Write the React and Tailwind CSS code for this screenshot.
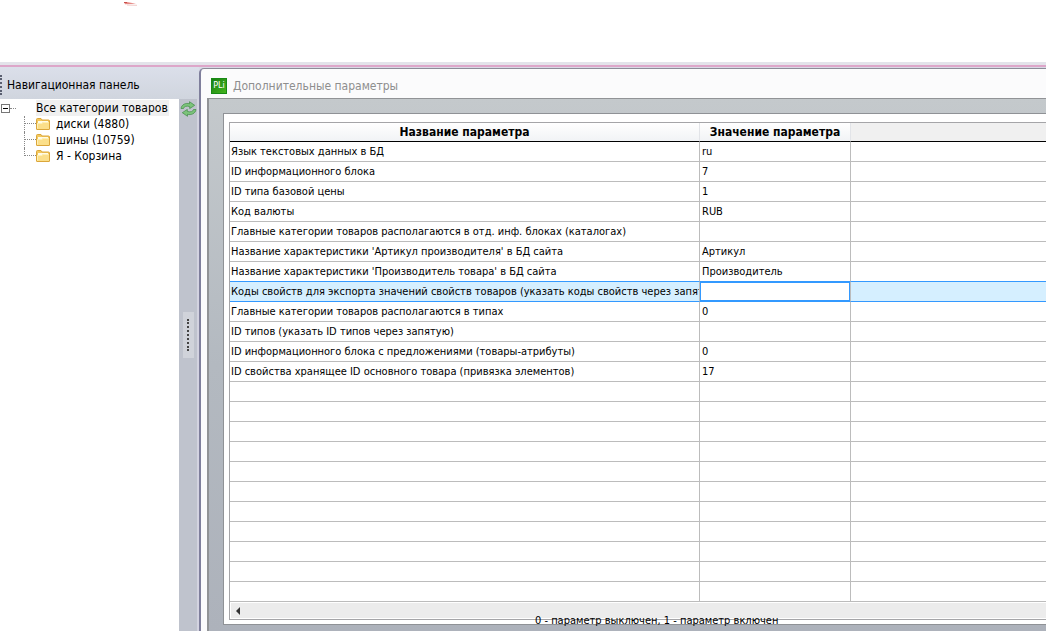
import clsx from "clsx";

const params = [
    { name: "Язык текстовых данных в БД", value: "ru" },
    { name: "ID информационного блока", value: "7" },
    { name: "ID типа базовой цены", value: "1" },
    { name: "Код валюты", value: "RUB" },
    { name: "Главные категории товаров располагаются в отд. инф. блоках (каталогах)", value: "" },
    { name: "Название характеристики 'Артикул производителя' в БД сайта", value: "Артикул" },
    { name: "Название характеристики 'Производитель товара' в БД сайта", value: "Производитель" },
    { name: "Коды свойств для экспорта значений свойств товаров (указать коды свойств через запятую)", value: "" },
    { name: "Главные категории товаров располагаются в типах", value: "0" },
    { name: "ID типов (указать ID типов через запятую)", value: "" },
    { name: "ID информационного блока с предложениями (товары-атрибуты)", value: "0" },
    { name: "ID свойства хранящее ID основного товара (привязка элементов)", value: "17" },
];

const EMPTY_ROWS = 11;
const SELECTED = 7;

const categories = ["диски (4880)", "шины (10759)", "Я - Корзина"];

const FolderIcon = () => (
    <svg width="14" height="12" viewBox="0 0 14 12" className="shrink-0">
        <path d="M.5 11V1.500Q.5.5 1.500.5H5L6 2H12.500Q13.500 2 13.500 3V11z" fill="#f3c85c" stroke="#dba63a" />
        <path d="M2 3H12V5H2z" fill="#fffbe6" />
        <path d="M1 11V5H6L7 4H13V11z" fill="#fbdf8a" />
        <path d="M.5 11.500H13.500" stroke="#dba63a" />
        <path d="M1.500 10.500V5.500H6.200L7.200 4.500H12.500" fill="none" stroke="#fff0b4" />
    </svg>
);

const RefreshIcon = () => (
    <svg width="17" height="16" viewBox="0 0 17 16">
        <path d="M1 7.500C1.500 3.500 6 1.500 9.500 2.800V.7L14.700 4.300 9.700 7.600V5.600C6.500 4.600 4 5.300 3.500 7.500z" fill="#7cc47a" stroke="#3f8b45" strokeWidth=".7" />
        <path d="M16 8.500C15.500 12.500 11 14.500 7.500 13.200V15.300L2.300 11.700 7.300 8.400V10.400C10.500 11.400 13 10.700 13.500 8.500z" fill="#7cc47a" stroke="#3f8b45" strokeWidth=".7" />
    </svg>
);

const RedMark = () => (
    <svg width="14" height="6" viewBox="0 0 14 6" className="ml-[124px]">
        <path d="M0 1H3L12 2.700 1 3.200z" fill="#e58a86" />
        <path d="M0 1.500H3" stroke="#c94f4a" />
        <path d="M3 4 13 4.300" stroke="#f0c9c6" />
    </svg>
);

const NavPanel = () => (
    <aside className="flex w-[199px] shrink-0 flex-col">
        <div className="flex h-8 items-center gap-1 bg-linear-to-b from-[#dbdfea] to-[#d0d5de] pt-1 text-[12px]">
            <span className="h-5 w-[3px] border-l-2 border-dotted border-[#5a5f70]"></span>
            <h2>Навигационная панель</h2>
        </div>
        <div className="flex flex-1">
            <nav className="w-[179px] pt-px text-[12px] leading-4">
                <div className="flex h-4 items-center">
                    <button type="button" aria-label="Свернуть" className="ml-px flex size-[9px] shrink-0 items-center justify-center border border-[#777] bg-white">
                        <span className="h-px w-[5px] bg-black"></span>
                    </button>
                    <span className="w-[6px] border-t border-dotted border-[#888]"></span>
                    <a href="#all" className="ml-5 whitespace-nowrap bg-[#f0f0f0] pr-px">Все категории товаров</a>
                </div>
                <ul className="ml-6">
                    {categories.map((item, i) => (
                        <li key={item} className="flex h-4 items-center">
                            <span className={clsx("flex w-3 flex-col border-l border-dotted border-[#888]", i === categories.length - 1 ? "h-2 self-start" : "h-4")}>
                                <span className="h-2 shrink-0 border-b border-dotted border-[#888]"></span>
                            </span>
                            <FolderIcon />
                            <a href={`#cat-${i}`} className="ml-[6px]">{item}</a>
                        </li>
                    ))}
                </ul>
            </nav>
            <div className="flex flex-1 flex-col items-center border-r-2 border-[#d3d3e0] bg-[#bfc3cd] pt-[2px]">
                <button type="button" aria-label="Обновить"><RefreshIcon /></button>
                {/* splitter handle */}
                <div className="mt-[195px] flex h-[46px] w-[11px] items-center justify-center bg-[#d0d3da]">
                    <span className="h-8 border-l-2 border-dotted border-[#444]"></span>
                </div>
            </div>
        </div>
    </aside>
);

const ParamTable = () => (
    <table className="w-full table-fixed border-separate border-spacing-0 text-[11px]">
        <colgroup>
            <col className="w-[470px]" />
            <col className="w-[151px]" />
            <col />
        </colgroup>
        <thead>
            <tr className="h-[19px] text-[12px] leading-4">
                <th className="border-b border-r border-b-black border-r-[#e2e4e8] bg-linear-to-b from-white to-[#f1f3f5] p-0">Название параметра</th>
                <th className="border-b border-r border-b-black border-r-[#e2e4e8] bg-linear-to-b from-white to-[#f1f3f5] p-0">Значение параметра</th>
                <th className="border-b border-black bg-[#f0f0f0] p-0"></th>
            </tr>
        </thead>
        <tbody>
            {params.map((param, i) => {
                const selected = i === SELECTED;
                const line = selected || i === SELECTED - 1 ? "border-b-[#3399ff]" : "border-b-[#bcbcbc]";
                return (
                    <tr key={param.name} className={clsx("h-5 leading-4", selected && "bg-[#d5efff]")}>
                        <td className={clsx("overflow-hidden whitespace-nowrap border-b border-r border-r-[#bcbcbc] p-0 pl-px", line)}>{param.name}</td>
                        <td className={clsx("border-b border-r border-r-[#bcbcbc] p-0", line, !selected && "pl-[2px]")}>
                            {selected ? (
                                <input aria-label={param.name} defaultValue={param.value} className="block h-[19px] w-full border border-[#3399ff] bg-white px-1 outline-none" />
                            ) : param.value}
                        </td>
                        <td className={clsx("border-b p-0", line)}></td>
                    </tr>
                );
            })}
            {Array.from({ length: EMPTY_ROWS }, (_, i) => (
                <tr key={i} className="h-5">
                    <td className="border-b border-r border-[#bcbcbc] p-0"></td>
                    <td className="border-b border-r border-[#bcbcbc] p-0"></td>
                    <td className="border-b border-[#bcbcbc] p-0"></td>
                </tr>
            ))}
        </tbody>
    </table>
);

const ParamWindow = () => (
    <main className="flex min-w-0 flex-1 flex-col bg-[#d9d9e6] pt-px">
        <div className="flex flex-1 flex-col rounded-tl-[5px] border-l-2 border-t border-l-[#7f7f9c] border-t-[#8c8c98] bg-[#fbfbfc] pl-[6px]">
            <div className="flex h-[29px] items-center gap-[6px] pl-1 pt-1 text-[12px] text-[#8e8e8e]">
                <span className="flex size-4 items-center justify-center border border-[#188a15] bg-linear-to-br from-[#158012] to-[#44b51d] text-[9px] leading-none text-white">PLi</span>
                <h1>Дополнительные параметры</h1>
            </div>
            <div className="flex-1 border-l-2 border-t border-[#919396] bg-linear-to-b from-[#c4c9cc] via-[#b3b9c0] to-[#adb2bb] pb-[6px] pl-[14px] pt-[14px]">
                <section className="relative border-y border-l border-[#8f9296] bg-white pb-1 pl-[5px] pt-2">
                    <div className="border-y border-l border-[#a5a5a8]">
                        <ParamTable />
                        <div className="flex h-[17px] items-center border border-r-0 border-white bg-[#ececec] pl-[5px]">
                            <button type="button" aria-label="Прокрутить влево">
                                <svg width="5" height="8" viewBox="0 0 5 8"><path d="M0 4 4 0v8z" fill="#333" /></svg>
                            </button>
                        </div>
                    </div>
                    {/* hint lies over the bottom edge of the frame */}
                    <p className="absolute -bottom-1 left-[311px] whitespace-nowrap text-[11px] leading-[14px]">0 - параметр выключен, 1 - параметр включен</p>
                </section>
            </div>
        </div>
    </main>
);

const App = () => {
    return (
        <div className="flex min-h-screen flex-col overflow-hidden bg-white font-['DejaVu_Sans_Condensed','DejaVu_Sans',sans-serif] text-black">
            <header className="h-[62px] pt-px">
                <RedMark />
            </header>
            <div className="h-[5px] border-b-2 border-[#dda6c9] bg-[#e3e3ea]"></div>
            <div className="flex flex-1">
                <NavPanel />
                <ParamWindow />
            </div>
        </div>
    );
};

export default App;
